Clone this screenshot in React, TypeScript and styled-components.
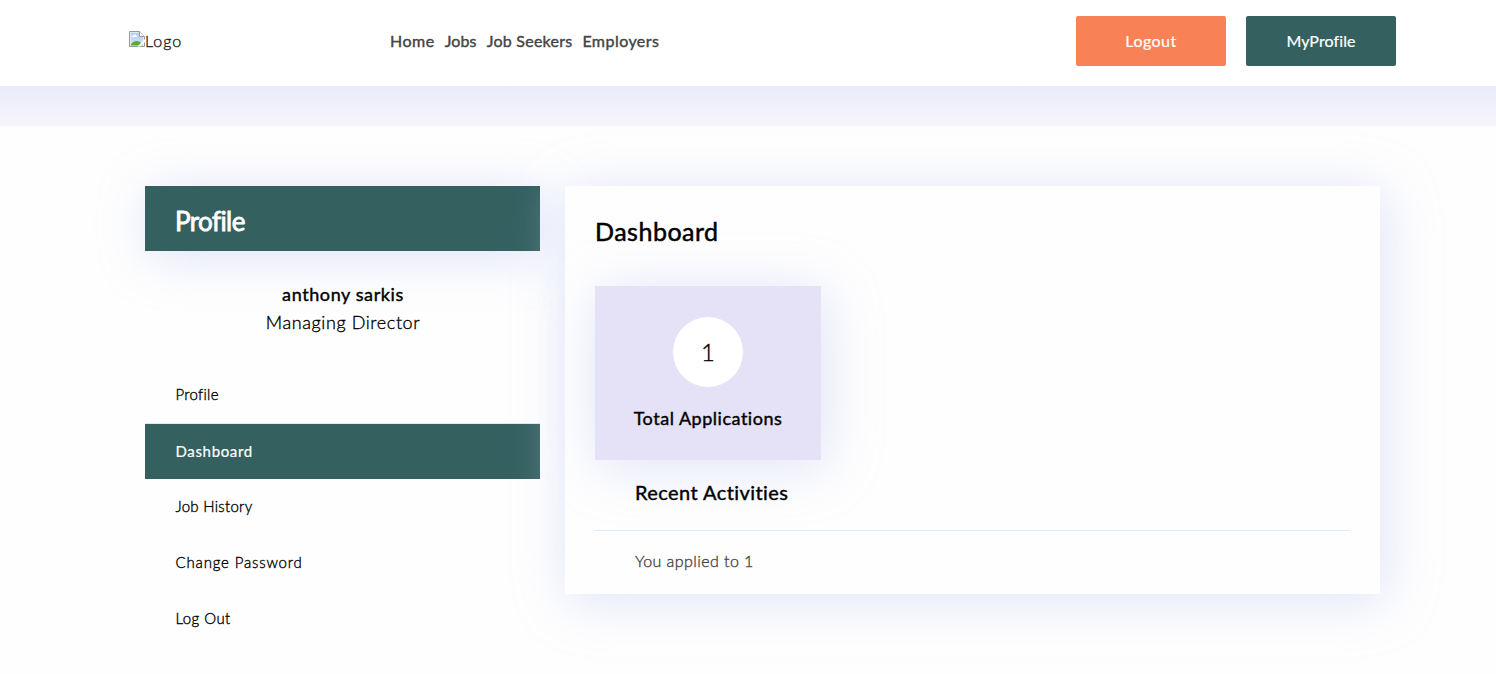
import React from "react";
import styled, { createGlobalStyle } from "styled-components";

const GREEN = "#346060";
const SHADOW = "4px 6px 50px rgba(212, 217, 247, 0.75)";

const GlobalStyle = createGlobalStyle`
  *, *::before, *::after { box-sizing: border-box; }
  html, body { margin: 0; padding: 0; overflow: hidden; background: #fefefe; }
  body { font-family: Lato, "Open Sans", sans-serif; font-size: 16px; color: #000; }
  h1, h2, h3, h4, p, ul { margin: 0; padding: 0; font-weight: 400; }
  a { color: inherit; text-decoration: none; }
`;

const Text = styled.span<{ $track?: number; $stroke?: number; $light?: boolean }>`
  letter-spacing: ${(p) => p.$track ?? 0}px;
  font-weight: ${(p) => (p.$light ? 300 : 400)};
  -webkit-text-stroke: ${(p) => (p.$light ? 0.35 : p.$stroke ?? 0)}px currentColor;
  font-variant-ligatures: none;
  white-space: nowrap;
`;

const Page = styled.div`
  height: 674px;
  overflow: hidden;
`;

const Header = styled.header`
  display: flex;
  align-items: flex-start;
  height: 86px;
  padding: 16px 100px 0 129px;
  background: #fff;
`;

const Brand = styled.a`
  display: flex;
  width: 261px;
  height: 50px;
  padding-top: 15px;
  line-height: 20px;
  color: #222;
  svg { flex: none; }
`;

const Nav = styled.nav`
  display: flex;
  gap: 10px;
  flex: 1;
  line-height: 49px;
  color: #444;
`;

const Actions = styled.div`
  display: flex;
  gap: 20px;
`;

const Button = styled.button<{ $color: string }>`
  width: 150px;
  height: 50px;
  padding: 0;
  border: 0;
  border-radius: 2px;
  background: ${(p) => p.$color};
  color: #fff;
  font: 16px/50px Lato, sans-serif;
`;

const Band = styled.div`
  height: 40px;
  background: linear-gradient(#e9ebfa, #f0f1fa 60%, #f5f5fa);
`;

const Content = styled.main`
  display: flex;
  align-items: flex-start;
  gap: 25px;
  height: 548px;
  padding: 60px 116px 0 145px;
`;

const Sidebar = styled.aside`
  width: 395px;
`;

const SidebarTitle = styled.h2`
  height: 65px;
  padding: 5px 30px 0;
  background: ${GREEN};
  box-shadow: ${SHADOW};
  color: #fff;
  font-size: 26px;
  line-height: 60px;
`;

const Person = styled.div`
  display: flex;
  flex-direction: column;
  align-items: center;
  height: 116px;
  padding: 29px 0 0 1px;
  font-size: 18px;
  line-height: 28px;
`;

const Menu = styled.ul`
  list-style: none;
  font-size: 15px;
`;

const MenuItem = styled.li<{ $active?: boolean }>`
  height: 56px;
  padding-left: 30.5px;
  border-top: 1px solid ${(p) => (p.$active ? "#d8ebf0" : "transparent")};
  background: ${(p) => (p.$active ? GREEN : "transparent")};
  background-clip: padding-box;
  color: ${(p) => (p.$active ? "#fff" : "#000")};
  line-height: ${(p) => (p.$active ? 54 : 52)}px;
`;

const Panel = styled.section`
  position: relative;
  width: 815px;
  height: 408px;
  padding: 29px 30px 0;
  background: #fefefe;
  box-shadow: ${SHADOW};
`;

const PanelTitle = styled.h1`
  height: 71px;
  font-size: 25px;
  line-height: 32px;
`;

const StatCard = styled.div`
  display: flex;
  flex-direction: column;
  align-items: center;
  width: 226px;
  height: 174px;
  padding-top: 31px;
  background: #e5e1f6;
  box-shadow: ${SHADOW};
`;

const Count = styled.div`
  width: 70px;
  height: 70px;
  border-radius: 50%;
  background: #fff;
  font-size: 24px;
  line-height: 70px;
  text-align: center;
`;

const StatLabel = styled.h4`
  margin-top: 17px;
  font-size: 18px;
  line-height: 28px;
`;

const ActivityTitle = styled.h3`
  height: 71px;
  padding: 17px 40px 0;
  border-bottom: 1px solid #d7ecfc;
  font-size: 20px;
  line-height: 30px;
`;

const Activity = styled.p`
  padding: 17px 40px 0;
  color: #444;
  font-size: 16px;
  line-height: 26px;
`;

const BrokenImage = () => (
  <svg width="16" height="16" viewBox="0 0 16 16" aria-hidden="true">
    <defs>
      <linearGradient id="sky" x1="0" y1="0" x2="0" y2="1">
        <stop offset="0" stopColor="#b4cbf3" />
        <stop offset="1" stopColor="#d5e3fa" />
      </linearGradient>
    </defs>
    <path d="M.5.5h10l5 5v10H.5z" fill="#fff" stroke="#999" />
    <path d="M1.500 1.500H10.500v4.500H14.500v8.500h-13z" fill="url(#sky)" />
    <path d="M2.500 6c0-1 1-1.600 1.800-1.200C4.800 3 7.300 3.200 7.400 4.700 8.500 4.700 8.700 6 8 6z" fill="#fff" />
    <path d="M1.500 14.500c1-2.800 3.500-4.500 6.200-4.500 2.400 0 4.800 1.700 6.300 4.500z" fill="#56ad32" />
    <path d="M10.500.5v5h5" fill="#fff" stroke="#999" />
    <path d="M16 8v3L11.500 15.500H8.500z" fill="#fff" />
  </svg>
);

const navItems = [
  { label: "Home", track: 0.5 },
  { label: "Jobs", track: 0.15 },
  { label: "Job Seekers", track: 0.25 },
  { label: "Employers", track: 0.45 },
];

const menuItems = [
  { label: "Profile", track: 0.3 },
  { label: "Dashboard", track: 0.65, active: true },
  { label: "Job History", track: 0.28 },
  { label: "Change Password", track: 0.83 },
  { label: "Log Out", track: 0.45 },
];

export default function App() {
  return (
    <Page>
      <GlobalStyle />
      <Header>
        <Brand href="#">
          <BrokenImage />
          <Text $track={1} $light>Logo</Text>
        </Brand>
        <Nav>
          {navItems.map((item) => (
            <a href="#" key={item.label}>
              <Text $track={item.track} $stroke={0.4}>{item.label}</Text>
            </a>
          ))}
        </Nav>
        <Actions>
          <Button $color="#f88256"><Text $track={0.45} $stroke={0.2}>Logout</Text></Button>
          <Button $color={GREEN}><Text $track={0.1} $stroke={0.2}>MyProfile</Text></Button>
        </Actions>
      </Header>
      <Band />
      <Content>
        <Sidebar>
          <SidebarTitle><Text $track={-0.6} $stroke={0.8}>Profile</Text></SidebarTitle>
          <Person>
            <Text $track={0.6} $stroke={0.4}>anthony sarkis</Text>
            <Text $track={0.6} $light>Managing Director</Text>
          </Person>
          <Menu>
            {menuItems.map((item) => (
              <MenuItem key={item.label} $active={item.active}>
                <Text $track={item.track} $stroke={0.2} $light={!item.active}>{item.label}</Text>
              </MenuItem>
            ))}
          </Menu>
        </Sidebar>
        <Panel>
          <PanelTitle><Text $track={0.5} $stroke={0.5}>Dashboard</Text></PanelTitle>
          <StatCard>
            <Count><Text $light>1</Text></Count>
            <StatLabel><Text $track={0.52} $stroke={0.4}>Total Applications</Text></StatLabel>
          </StatCard>
          <ActivityTitle><Text $track={0.43} $stroke={0.4}>Recent Activities</Text></ActivityTitle>
          <Activity><Text $track={0.43} $light>You applied to 1</Text></Activity>
        </Panel>
      </Content>
    </Page>
  );
}
